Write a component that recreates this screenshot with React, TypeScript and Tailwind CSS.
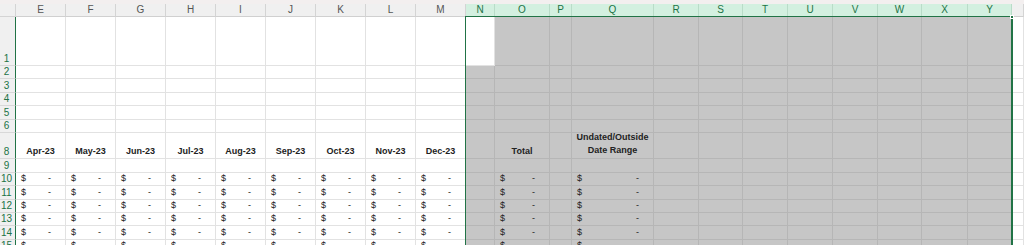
import React from 'react';

type Col = { key: string; w: string; sel: boolean };

const cols: Col[] = [
  { key: 'E', w: 'w-[50px]', sel: false },
  { key: 'F', w: 'w-[50px]', sel: false },
  { key: 'G', w: 'w-[50px]', sel: false },
  { key: 'H', w: 'w-[50px]', sel: false },
  { key: 'I', w: 'w-[50px]', sel: false },
  { key: 'J', w: 'w-[50px]', sel: false },
  { key: 'K', w: 'w-[50px]', sel: false },
  { key: 'L', w: 'w-[50px]', sel: false },
  { key: 'M', w: 'w-[50px]', sel: false },
  { key: 'N', w: 'w-[29px]', sel: true },
  { key: 'O', w: 'w-[55px]', sel: true },
  { key: 'P', w: 'w-[22px]', sel: true },
  { key: 'Q', w: 'w-[82px]', sel: true },
  { key: 'R', w: 'w-[45px]', sel: true },
  { key: 'S', w: 'w-[44px]', sel: true },
  { key: 'T', w: 'w-[45px]', sel: true },
  { key: 'U', w: 'w-[45px]', sel: true },
  { key: 'V', w: 'w-[45px]', sel: true },
  { key: 'W', w: 'w-[44px]', sel: true },
  { key: 'X', w: 'w-[46px]', sel: true },
  { key: 'Y', w: 'w-[44px]', sel: true },
  { key: 'Z', w: 'w-[12px]', sel: false },
];

const rows = [
  { n: 1, h: 'h-[49px]' },
  { n: 2, h: 'h-[13px]' },
  { n: 3, h: 'h-[14px]' },
  { n: 4, h: 'h-[13px]' },
  { n: 5, h: 'h-[14px]' },
  { n: 6, h: 'h-[13px]' },
  { n: 8, h: 'h-[26px]' },
  { n: 9, h: 'h-[14px]' },
  { n: 10, h: 'h-[13px]' },
  { n: 11, h: 'h-[14px]' },
  { n: 12, h: 'h-[13px]' },
  { n: 13, h: 'h-[13px]' },
  { n: 14, h: 'h-[14px]' },
  { n: 15, h: 'h-[13px]' },
];

const months: Record<string, string> = {
  E: 'Apr-23', F: 'May-23', G: 'Jun-23', H: 'Jul-23', I: 'Aug-23',
  J: 'Sep-23', K: 'Oct-23', L: 'Nov-23', M: 'Dec-23',
};

const moneyCols = ['E', 'F', 'G', 'H', 'I', 'J', 'K', 'L', 'M', 'O', 'Q'];

function CellContent({ row, col }: { row: number; col: string }) {
  if (row === 8) {
    if (months[col]) return <span className="w-full text-center font-bold">{months[col]}</span>;
    if (col === 'O') return <span className="w-full text-center font-bold">Total</span>;
    if (col === 'Q')
      return (
        <span className="w-full text-center font-bold leading-[13px]">
          Undated/Outside
          <br />
          Date Range
        </span>
      );
    return null;
  }
  if (row >= 10 && moneyCols.includes(col)) {
    return (
      <span className="w-full flex justify-between pl-[5px] pr-[14px]">
        <span>$</span>
        <span>-</span>
      </span>
    );
  }
  return null;
}

export default function App() {
  return (
    <div className="relative w-[1024px] h-[245px] overflow-hidden bg-white text-[#222] font-['Liberation_Sans',Arial,sans-serif]">
      <div className="h-[4px] bg-[#f3efef]" />

      {/* Column headers */}
      <div className="flex h-[13px] text-[10px] leading-[12px]">
        <div className="w-[16px] shrink-0 bg-[#f0f0f0] border-r border-b border-[#d4d4d4]" />
        {cols.map((c) => (
          <div
            key={c.key}
            className={`${c.w} shrink-0 text-center border-r ${
              c.sel
                ? 'bg-[#d3f0e0] text-[#217346] border-[#b9dcc8] border-b border-b-[#217346]'
                : 'bg-[#f0f0f0] text-[#555] border-[#d4d4d4] border-b border-b-[#d0d0d0]'
            }`}
          >
            {c.key === 'Z' ? '' : c.key}
          </div>
        ))}
      </div>

      {/* Rows */}
      {rows.map((r) => (
        <div key={r.n} className={`flex ${r.h}`}>
          <div className="w-[16px] shrink-0 bg-[#f0f0f0] border-r border-r-[#217346] border-b border-b-[#d8d8d8] text-[10px] leading-[12px] text-[#217346] flex items-end justify-center pr-[2px]">
            {r.n}
          </div>
          {cols.map((c) => {
            const gray = c.sel && !(r.n === 1 && c.key === 'N');
            return (
              <div
                key={c.key}
                className={`${c.w} shrink-0 border-r border-b flex items-end pb-[1px] text-[9px] leading-[11px] whitespace-nowrap overflow-hidden ${
                  gray ? 'bg-[#c6c6c6] border-[#b6b6b6]' : 'bg-white border-[#e2e2e2]'
                }`}
              >
                <CellContent row={r.n} col={c.key} />
              </div>
            );
          })}
        </div>
      ))}

      {/* Selection outline */}
      <div className="absolute left-[465px] top-[16px] w-[548px] h-[240px] border-l-[1.5px] border-t border-r-2 border-[#217346] pointer-events-none" />
      <div className="absolute left-[1010px] top-[15px] w-[4px] h-[4px] bg-[#217346] border border-white" />
    </div>
  );
}
